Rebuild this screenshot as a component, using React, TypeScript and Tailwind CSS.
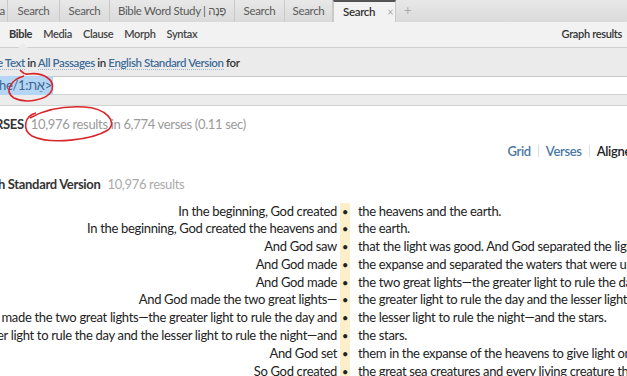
const tabs = [
  { label: "a", w: "w-[8px]", cut: true },
  { label: "Search", w: "w-[52px]" },
  { label: "Search", w: "w-[50px]" },
  { label: "Bible Word Study | פָּנָה", w: "w-[125px]" },
  { label: "Search", w: "w-[50px]" },
  { label: "Search", w: "w-[48px]" },
];

const tools = ["Bible", "Media", "Clause", "Morph", "Syntax"];

const rows = [
  ["In the beginning, God created", "the heavens and the earth."],
  ["In the beginning, God created the heavens and", "the earth."],
  ["And God saw", "that the light was good. And God separated the light from the darkness."],
  ["And God made", "the expanse and separated the waters that were under the expanse"],
  ["And God made", "the two great lights—the greater light to rule the day and"],
  ["And God made the two great lights—", "the greater light to rule the day and the lesser light to rule the night"],
  ["And God made the two great lights—the greater light to rule the day and", "the lesser light to rule the night—and the stars."],
  ["made the two great lights—the greater light to rule the day and the lesser light to rule the night—and", "the stars."],
  ["And God set", "them in the expanse of the heavens to give light on the earth,"],
  ["So God created", "the great sea creatures and every living creature that moves"],
];

function Link({ children }: { children: React.ReactNode }) {
  return <span className="text-[#3d6b98] border-b border-dotted border-[#9bb3cc]">{children}</span>;
}

export default function App() {
  return (
    <div className="relative h-[376px] w-[627px] overflow-hidden bg-white tracking-[-0.33px] text-[#333] [font-family:Lato,'Noto_Sans',sans-serif]">
      {/* tab strip */}
      <div className="flex h-[22px] items-stretch bg-gradient-to-b from-[#e8e8e8] to-[#dadada] text-[11.5px] text-[#5a5a5a]">
        {tabs.map((t, i) => (
          <div
            key={i}
            className={`${t.w} flex shrink-0 items-center whitespace-nowrap border-r border-[#c9c9c9] ${t.cut ? "justify-end pr-[2px]" : "justify-center"}`}
          >
            {t.label}
          </div>
        ))}
        <div className="flex w-[63px] items-center gap-[12px] border-x border-[#c9c9c9] border-t-2 border-t-[#555] bg-[#f2f2f2] pl-[9px] font-semibold text-[#333]">
          Search
          <span className="text-[11px] font-normal text-[#aaa]">×</span>
        </div>
        <div className="flex items-center pl-[8px] text-[13px] text-[#aaa]">+</div>
      </div>

      {/* toolbar */}
      <div className="relative flex h-[26px] items-center border-b border-[#cfcfcf] bg-[#f2f2f2] pl-[9px] pr-[5px] text-[11px] text-[#333]">
        <div className="flex gap-[11px]">
          {tools.map((t, i) => (
            <span key={t} className={i === 0 ? "font-bold" : "font-semibold text-[#444]"}>
              {t}
            </span>
          ))}
        </div>
        <span className="ml-auto font-semibold">Graph results</span>
        <div className="absolute bottom-[-1px] left-[18px] h-0 w-0 border-x-[5px] border-b-[5px] border-x-transparent border-b-[#ebebeb]" />
      </div>

      {/* query line */}
      <div className="flex h-[29px] items-end border-b border-[#c8c8c8] bg-[#ebebeb] pb-[5px] text-[11.5px] tracking-[-0.4px]">
        <span className="ml-[-3px] whitespace-nowrap font-semibold">
          <Link>e Text</Link> in <Link>All Passages</Link> in <Link>English Standard Version</Link> for
        </span>
      </div>

      {/* input */}
      <div className="flex h-[17px] items-center bg-white text-[13px]">
        <span className="ml-[-1px] bg-[#b5d5f5] pr-[1px] text-[#3a6690]">he/1:אֵת&gt;</span>
      </div>
      <div className="h-[12px] border-y border-[#d2d2d2] bg-[#ececec]" />

      {/* result summary */}
      <div className="mt-[9px] flex items-center whitespace-nowrap text-[13px]">
        <span className="ml-[-5px] font-bold text-[#333]">RSES</span>
        <span className="ml-[7px] text-[#9a9a9a]">10,976 results in 6,774 verses (0.11 sec)</span>
      </div>

      {/* view switch */}
      <div className="mt-[7px] flex items-center justify-end gap-[7px] whitespace-nowrap text-[13px] font-semibold">
        <span className="text-[#4a77a3]">Grid</span>
        <span className="h-[12px] w-px bg-[#ddd]" />
        <span className="text-[#4a77a3]">Verses</span>
        <span className="h-[12px] w-px bg-[#ddd]" />
        <span className="mr-[-11px] text-[#222]">Aligned</span>
      </div>

      {/* version header */}
      <div className="mt-[14px] flex items-center whitespace-nowrap text-[13px]">
        <span className="ml-[-2px] font-bold">h Standard Version</span>
        <span className="ml-[7px] text-[#aaa]">10,976 results</span>
      </div>

      {/* aligned rows */}
      <div className="mt-[8px] grid grid-cols-[337px_16px_1fr] text-[13px] leading-[17.8px] text-[#222]">
        {rows.map(([l, r], i) => (
          <div key={i} className="contents">
            <div className="flex justify-end overflow-visible whitespace-nowrap">
              <span>{l}</span>
            </div>
            <div className="flex justify-center">
              <div className="flex w-[10px] justify-center bg-[#fcefc9] text-[11px]">•</div>
            </div>
            <div className="whitespace-nowrap pl-[5px]">{r}</div>
          </div>
        ))}
      </div>

      {/* hand-drawn annotations */}
      <svg className="pointer-events-none absolute left-0 top-0" width="627" height="376">
        <path
          d="M24 76 C 10 80, 4 92, 14 98 C 26 104, 48 100, 52 90 C 55 80, 44 72, 28 74 C 24 75, 22 72, 20 70"
          fill="none"
          stroke="#d8262a"
          strokeWidth="1.6"
        />
        <path
          d="M36 113 C 24 116, 22 130, 32 136 C 50 145, 92 140, 108 130 C 118 122, 106 108, 84 107 C 64 106, 44 110, 30 118"
          fill="none"
          stroke="#d8262a"
          strokeWidth="1.6"
        />
      </svg>
    </div>
  );
}
